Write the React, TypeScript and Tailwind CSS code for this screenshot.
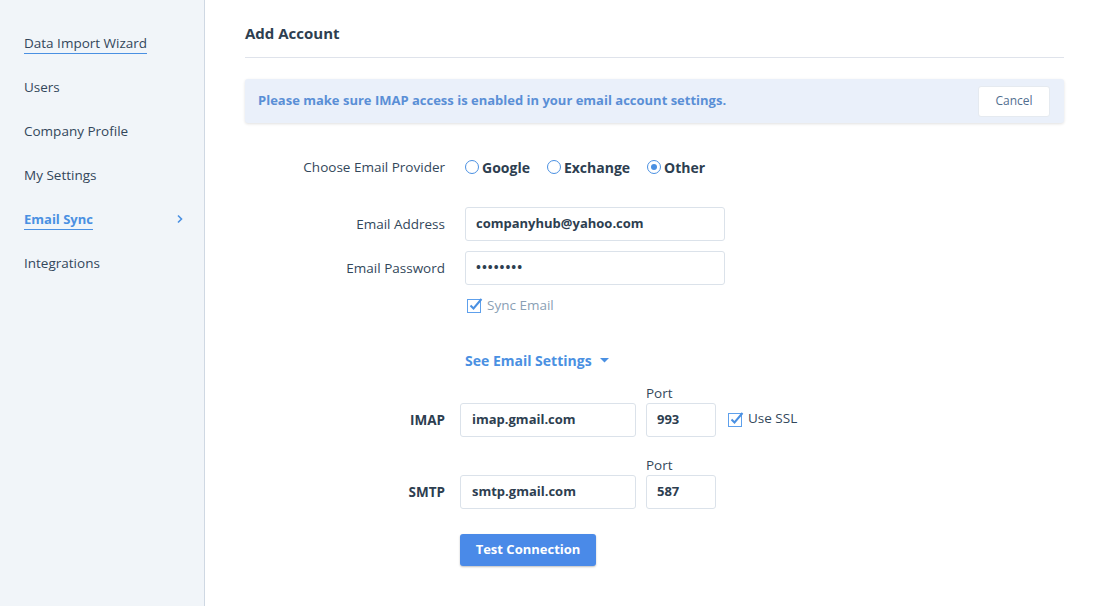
import React from "react";

const font = { fontFamily: '"Open Sans", "Liberation Sans", sans-serif' };

function Check() {
  return (
    <svg width="16" height="16" viewBox="0 0 16 16" className="shrink-0">
      <rect x="0.5" y="2.5" width="13" height="13" fill="white" stroke="#5ea0ec" strokeWidth="1" />
      <path d="M3.5 8.5 L6.5 11.5 L14.5 2" fill="none" stroke="#4a90e2" strokeWidth="2" />
    </svg>
  );
}

function Radio({ checked }: { checked?: boolean }) {
  return (
    <span className="w-[14px] h-[14px] rounded-full border border-[#4a90e2] bg-white flex items-center justify-center shrink-0">
      {checked && <span className="w-[6px] h-[6px] rounded-full bg-[#4a90e2]" />}
    </span>
  );
}

export default function App() {
  const items = ["Data Import Wizard", "Users", "Company Profile", "My Settings", "Email Sync", "Integrations"];
  return (
    <div className="flex w-[1102px] h-[606px] bg-white text-[13.5px] text-[#33475b] overflow-hidden" style={font}>
      <aside className="w-[205px] shrink-0 bg-[#f1f5f9] border-r border-[#cfd8e3] pt-[21px]">
        {items.map((it) => {
          const active = it === "Email Sync";
          const underline = it === "Data Import Wizard" || active;
          return (
            <div key={it} className="h-[44px] flex items-center justify-between pl-[24px] pr-[20px]">
              <span
                className={
                  (active ? "font-bold text-[13px] text-[#4a90e2] " : "text-[#33475b] ") +
                  (underline ? "border-b border-[#4a90e2] leading-[19px] mt-[2px]" : "leading-[18px]")
                }
              >
                {it}
              </span>
              {active && (
                <svg width="8" height="10" viewBox="0 0 8 10">
                  <path d="M2 1.5 L5.5 5 L2 8.5" fill="none" stroke="#4a90e2" strokeWidth="1.6" />
                </svg>
              )}
            </div>
          );
        })}
      </aside>
      <main className="flex-1 pl-[40px] pr-[38px] pt-[22px]">
        <div className="pb-[13px] border-b border-[#dfe3eb]">
          <h1 className="text-[15px] leading-[22px] font-bold text-[#2d3e50]">Add Account</h1>
        </div>
        <div className="mt-[21px] h-[44px] bg-[#eaf0fa] rounded-[3px] shadow-[0_1px_3px_rgba(0,0,0,0.12)] flex items-center justify-between pl-[13px] pr-[14px]">
          <span className="font-bold text-[13px] text-[#5a8fd6]">Please make sure IMAP access is enabled in your email account settings.</span>
          <button className="h-[31px] w-[72px] bg-white rounded-[3px] border border-[#e5eaf0] text-[#516f90] text-[12px]">Cancel</button>
        </div>

        <div className="mt-[34px] flex items-center h-[20px]">
          <div className="w-[200px] text-right">Choose Email Provider</div>
          <div className="ml-[20px] flex items-center">
            <label className="flex items-center gap-[3px] font-bold text-[#2d3e50] text-[14px]">
              <Radio /> Google
            </label>
            <label className="ml-[17px] flex items-center gap-[3px] font-bold text-[#2d3e50] text-[14px]">
              <Radio /> Exchange
            </label>
            <label className="ml-[17px] flex items-center gap-[3px] font-bold text-[#2d3e50] text-[14px]">
              <Radio checked /> Other
            </label>
          </div>
        </div>

        <div className="mt-[30px] flex items-center">
          <div className="w-[200px] text-right">Email Address</div>
          <div className="ml-[20px] w-[260px] h-[34px] border border-[#dbe2ea] rounded-[3px] flex items-center px-[10px] font-bold text-[13px] text-[#2d3e50]">
            companyhub@yahoo.com
          </div>
        </div>
        <div className="mt-[10px] flex items-center">
          <div className="w-[200px] text-right">Email Password</div>
          <div className="ml-[20px] w-[260px] h-[34px] border border-[#dbe2ea] rounded-[3px] flex items-center px-[10px] font-bold text-[13px] text-[#2d3e50] tracking-[1px]">
            ••••••••
          </div>
        </div>
        <div className="mt-[10px] h-[20px] flex items-center ml-[222px] gap-[4px] text-[#8aa0b5]">
          <Check />
          <span>Sync Email</span>
        </div>

        <div className="mt-[35px] h-[20px] flex items-center ml-[220px] gap-[8px] font-bold text-[#4a90e2] text-[14px]">
          <span>See Email Settings</span>
          <svg width="9" height="6" viewBox="0 0 9 6"><path d="M0 1 L9 1 L4.5 5.5 Z" fill="#4a90e2" /></svg>
        </div>

        <div className="mt-[14px] ml-[401px] leading-[18px]">Port</div>
        <div className="mt-[1px] flex items-center">
          <div className="w-[200px] text-right font-bold text-[#2d3e50]">IMAP</div>
          <div className="ml-[15px] w-[176px] h-[34px] border border-[#dbe2ea] rounded-[3px] flex items-center px-[11px] font-bold text-[13px] text-[#2d3e50]">
            imap.gmail.com
          </div>
          <div className="ml-[10px] w-[70px] h-[34px] border border-[#dbe2ea] rounded-[3px] flex items-center px-[10px] font-bold text-[13px] text-[#2d3e50]">
            993
          </div>
          <div className="ml-[12px] flex items-center gap-[4px] -mt-[3px]">
            <Check />
            <span>Use SSL</span>
          </div>
        </div>

        <div className="mt-[19px] ml-[401px] leading-[18px]">Port</div>
        <div className="mt-[1px] flex items-center">
          <div className="w-[200px] text-right font-bold text-[#2d3e50]">SMTP</div>
          <div className="ml-[15px] w-[176px] h-[34px] border border-[#dbe2ea] rounded-[3px] flex items-center px-[11px] font-bold text-[13px] text-[#2d3e50]">
            smtp.gmail.com
          </div>
          <div className="ml-[10px] w-[70px] h-[34px] border border-[#dbe2ea] rounded-[3px] flex items-center px-[10px] font-bold text-[13px] text-[#2d3e50]">
            587
          </div>
        </div>

        <button className="mt-[25px] ml-[215px] h-[32px] w-[136px] bg-[#4a8ae8] rounded-[3px] text-white text-[13px] font-bold shadow-[0_1px_2px_rgba(0,0,0,0.25)]">
          Test Connection
        </button>
      </main>
    </div>
  );
}
